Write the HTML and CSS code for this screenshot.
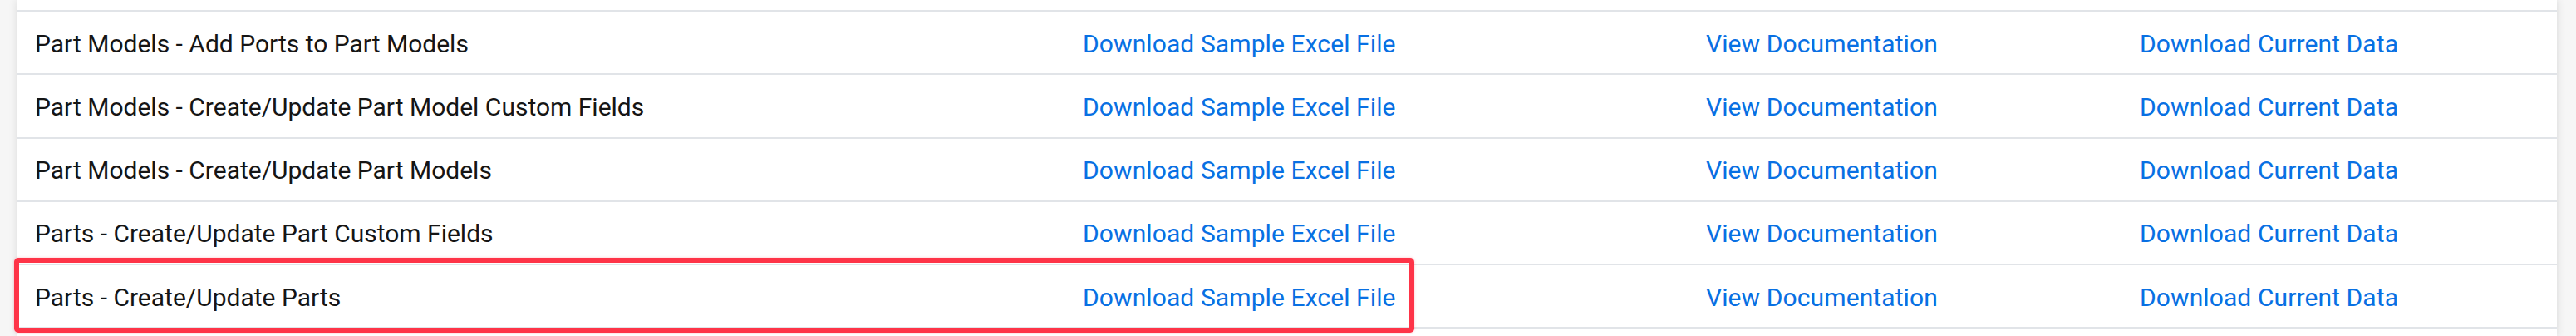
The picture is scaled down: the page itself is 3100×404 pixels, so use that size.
FILE: index.html
```html
<!DOCTYPE html>
<html lang="en">
<head>
<meta charset="utf-8">
<title>Bulk import templates</title>
<link rel="stylesheet" href="styles.css">
</head>
<body>
<div class="page">
  <div class="card">
    <div class="row">
      <div class="cell name">Part Models - Add Ports to Part Models</div>
      <div class="cell"><a class="link" href="#">Download Sample Excel File</a></div>
      <div class="cell"><a class="link" href="#">View Documentation</a></div>
      <div class="cell"><a class="link" href="#">Download Current Data</a></div>
    </div>
    <div class="row">
      <div class="cell name">Part Models - Create/Update Part Model Custom Fields</div>
      <div class="cell"><a class="link" href="#">Download Sample Excel File</a></div>
      <div class="cell"><a class="link" href="#">View Documentation</a></div>
      <div class="cell"><a class="link" href="#">Download Current Data</a></div>
    </div>
    <div class="row">
      <div class="cell name">Part Models - Create/Update Part Models</div>
      <div class="cell"><a class="link" href="#">Download Sample Excel File</a></div>
      <div class="cell"><a class="link" href="#">View Documentation</a></div>
      <div class="cell"><a class="link" href="#">Download Current Data</a></div>
    </div>
    <div class="row">
      <div class="cell name">Parts - Create/Update Part Custom Fields</div>
      <div class="cell"><a class="link" href="#">Download Sample Excel File</a></div>
      <div class="cell"><a class="link" href="#">View Documentation</a></div>
      <div class="cell"><a class="link" href="#">Download Current Data</a></div>
    </div>
    <div class="row row-last">
      <div class="cell name">Parts - Create/Update Parts</div>
      <div class="cell"><a class="link" href="#">Download Sample Excel File</a></div>
      <div class="cell"><a class="link" href="#">View Documentation</a></div>
      <div class="cell"><a class="link" href="#">Download Current Data</a></div>
      <div class="highlight"></div>
    </div>
  </div>
</div>
</body>
</html>
```
FILE: styles.css
```css
html, body {
  margin: 0;
  padding: 0;
  background: #f6f6f6;
  overflow: hidden;
}

body {
  font-family: Roboto, "Liberation Sans", Arial, sans-serif;
  font-size: 30px;
}

.page {
  height: 404px;
  padding: 0 23px 0 21px;
}

.card {
  background: #ffffff;
  height: 404px;
  padding-top: 12px;
  box-sizing: border-box;
  box-shadow: 0 0 10px rgba(0, 0, 0, 0.13);
}

.row {
  position: relative;
  display: grid;
  grid-template-columns: 1261px 750px 522px 1fr;
  height: 76.25px;
  box-sizing: border-box;
  border-top: 2px solid #e1e4e8;
  align-items: center;
}

.row-last {
  border-bottom: 2px solid #e1e4e8;
  height: 78.25px;
}

.cell {
  padding: 2px 0 0 21px;
  white-space: nowrap;
}

.name {
  color: #151515;
}

.link {
  color: #0870e3;
  text-decoration: none;
  letter-spacing: 0.1px;
}

.highlight {
  position: absolute;
  left: -4px;
  top: -9px;
  width: 1685px;
  height: 90px;
  box-sizing: border-box;
  border: 6px solid #fe3448;
  border-radius: 5px;
  box-shadow: 0 0 3px rgba(254, 52, 72, 0.3);
  pointer-events: none;
}
```
